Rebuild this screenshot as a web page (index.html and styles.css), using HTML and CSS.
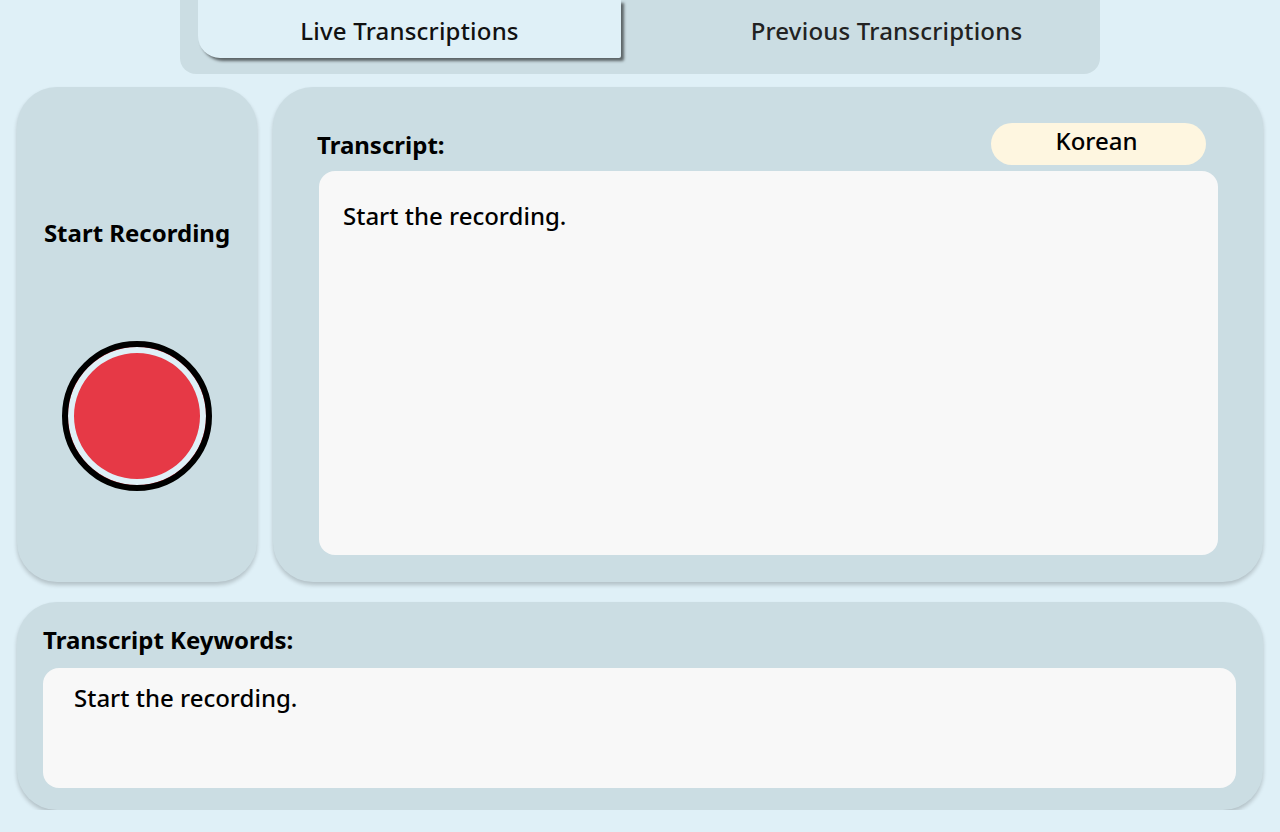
FILE: index.html
```html
<!DOCTYPE HTML>
<html>
<head>
<title>Transcriber</title>
<link rel="stylesheet" href="styles.css">
</head>
<body>
<nav class="tabs">
  <button class="tab tab-active">Live Transcriptions</button>
  <button class="tab tab-other">Previous Transcriptions</button>
</nav>

<div class="main-row">
  <div class="panel record-panel">
    <h2 class="record-title">Start Recording</h2>
    <button class="record-button" aria-label="Start recording"></button>
  </div>

  <div class="panel transcript-panel">
    <div class="transcript-head">
      <h2 class="label">Transcript:</h2>
      <span class="lang-pill">Korean</span>
    </div>
    <div class="text-box transcript-box">Start the recording.</div>
  </div>
</div>

<div class="panel keywords-panel">
  <h2 class="label">Transcript Keywords:</h2>
  <div class="text-box keywords-box">Start the recording.</div>
</div>
</body>
</html>
```

FILE: styles.css
```css
body {
  margin: 0;
  background: #dff0f7;
  font-family: "Noto Sans", "Open Sans", sans-serif;
  color: #000;
}

h2 {
  margin: 0;
}

.tabs {
  display: flex;
  width: 920px;
  height: 74px;
  margin: 0 auto;
  padding: 0 18px;
  box-sizing: border-box;
  background: #cbdde3;
  border-radius: 0 0 16px 16px;
}

.tab {
  flex-shrink: 0;
  width: 423px;
  height: 58px;
  border: none;
  background: transparent;
  font-family: inherit;
  font-size: 24px;
  font-weight: 500;
  letter-spacing: 0.2px;
  color: #111;
  padding: 2px 0 0 0;
}

.tab-active {
  background: #dff0f7;
  border-radius: 0 0 2px 22px;
  box-shadow: 3px 3px 3px rgba(0, 0, 0, 0.55);
}

.tab-other {
  margin-left: 54px;
  color: #222;
}

.main-row {
  display: flex;
  gap: 16px;
  margin: 13px 17px 0 17px;
}

.panel {
  background: #cbdde3;
  border-radius: 40px;
  box-shadow: 0 3px 4px rgba(0, 0, 0, 0.2);
}

.record-panel {
  width: 240px;
  height: 495px;
  display: flex;
  flex-direction: column;
  align-items: center;
  box-sizing: border-box;
  padding-top: 129px;
}

.record-title {
  font-size: 24px;
  font-weight: 700;
  line-height: 34px;
}

.record-button {
  width: 150px;
  height: 150px;
  margin-top: 91px;
  border-radius: 50%;
  border: 6px solid #000;
  background: #e63946;
  box-shadow: inset 0 0 0 6px #dff0f7;
  cursor: pointer;
}

.transcript-panel {
  flex: 1;
  height: 495px;
  box-sizing: border-box;
  padding: 36px 45px 27px 46px;
  display: flex;
  flex-direction: column;
}

.transcript-head {
  display: flex;
  align-items: center;
  justify-content: space-between;
  height: 42px;
  margin-bottom: 6px;
}

.label {
  font-size: 24px;
  font-weight: 700;
  line-height: 32px;
  margin-top: 2px;
  margin-left: -2px;
}

.lang-pill {
  width: 215px;
  height: 42px;
  margin-right: 12px;
  box-sizing: border-box;
  padding: 0 4px 8px 0;
  background: #fef6e0;
  border-radius: 21px;
  font-size: 24px;
  font-weight: 500;
  line-height: 36px;
  text-align: center;
}

.text-box {
  background: #f8f8f8;
  border-radius: 16px;
  font-size: 24px;
  font-weight: 500;
  line-height: 30px;
}

.transcript-box {
  flex: 1;
  padding: 30px 24px;
}

.keywords-panel {
  margin: 20px 17px 0 17px;
  height: 208px;
  box-sizing: border-box;
  padding: 22px 27px 22px 26px;
  display: flex;
  flex-direction: column;
}

.keywords-panel .label {
  margin: 0 0 12px 0;
}

.keywords-box {
  flex: 1;
  padding: 15px 31px;
}
```
